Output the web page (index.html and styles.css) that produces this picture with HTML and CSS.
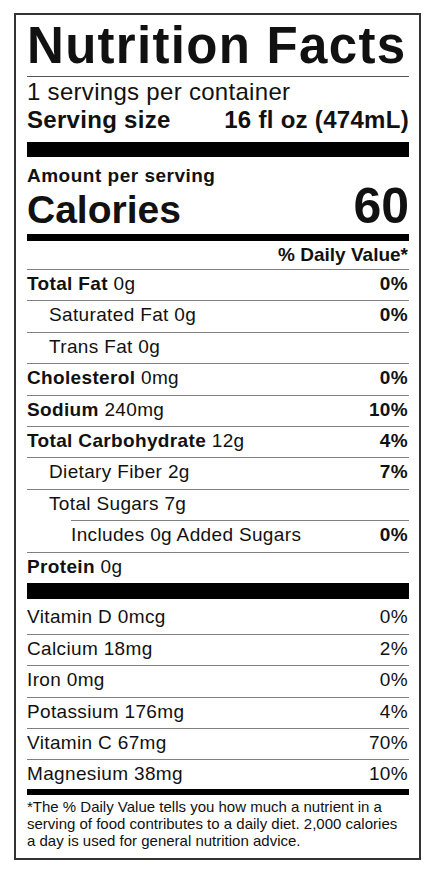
FILE: index.html
```html
<!DOCTYPE html>
<html lang="en">
<head>
    <meta charset="UTF-8">
    <meta name="viewport" content="width=device-width, initial-scale=1.0">
    <title>Nutrition Facts</title>
    <link rel="stylesheet" href="styles.css">
</head>
<body>

<div class="label">
    <!-- Header -->
    <h1 class="title">Nutrition Facts</h1>
    <p class="servings">1 servings per container</p>
    <div class="serving-size">
        <span>Serving size</span>
        <span>16 fl oz (474mL)</span>
    </div>
    <div class="bar bar-thick"></div>

    <!-- Calories -->
    <p class="amount">Amount per serving</p>
    <div class="calories">
        <span>Calories</span>
        <span class="cal-value">60</span>
    </div>
    <div class="bar bar-medium"></div>
    <div class="dv-head">% Daily Value*</div>

    <!-- Nutrients -->
    <div class="row"><span><b>Total Fat</b> 0g</span><b>0%</b></div>
    <div class="row indent"><span>Saturated Fat 0g</span><b>0%</b></div>
    <div class="row indent"><span>Trans Fat 0g</span></div>
    <div class="row"><span><b>Cholesterol</b> 0mg</span><b>0%</b></div>
    <div class="row"><span><b>Sodium</b> 240mg</span><b>10%</b></div>
    <div class="row"><span><b>Total Carbohydrate</b> 12g</span><b>4%</b></div>
    <div class="row indent"><span>Dietary Fiber 2g</span><b>7%</b></div>
    <div class="row indent"><span>Total Sugars 7g</span></div>
    <div class="row added"><span>Includes 0g Added Sugars</span><b>0%</b></div>
    <div class="row"><span><b>Protein</b> 0g</span></div>
    <div class="bar bar-thick bar-protein"></div>

    <!-- Vitamins and minerals -->
    <div class="vitamins">
        <div class="row"><span>Vitamin D 0mcg</span><span>0%</span></div>
        <div class="row"><span>Calcium 18mg</span><span>2%</span></div>
        <div class="row"><span>Iron 0mg</span><span>0%</span></div>
        <div class="row"><span>Potassium 176mg</span><span>4%</span></div>
        <div class="row"><span>Vitamin C 67mg</span><span>70%</span></div>
        <div class="row"><span>Magnesium 38mg</span><span>10%</span></div>
    </div>
    <div class="bar bar-foot"></div>

    <p class="footnote">*The % Daily Value tells you how much a nutrient in a serving of food contributes to a daily diet. 2,000 calories a day is used for general nutrition advice.</p>
</div>

</body>
</html>
```

FILE: styles.css
```css
body {
    font-family: "Liberation Sans", Arial, sans-serif;
    background-color: #fff;
    color: #111;
    margin: 0;
    padding: 13px 0 0 14px;
}
.label {
    width: 382px;
    border: 2px solid #333;
    padding: 0 10px 9px 11px;
}
.title {
    margin: 0;
    font-size: 51px;
    font-weight: bold;
    letter-spacing: 1.3px;
    line-height: 61px;
    border-bottom: 1px solid #555;
    white-space: nowrap;
}
.servings {
    margin: 0;
    font-size: 24px;
    letter-spacing: 0.3px;
    line-height: 29px;
}
.serving-size {
    display: flex;
    justify-content: space-between;
    font-size: 24px;
    font-weight: bold;
    letter-spacing: 0.3px;
    line-height: 28px;
}
.bar {
    background-color: #000;
}
.bar-thick {
    height: 15px;
    margin-top: 8px;
}
.amount {
    margin: 8px 0 0;
    font-size: 19px;
    font-weight: bold;
    letter-spacing: 0.5px;
    line-height: 22px;
}
.calories {
    display: flex;
    justify-content: space-between;
    align-items: baseline;
    height: 47px;
    line-height: 38px;
    font-weight: bold;
    font-size: 39px;
}
.cal-value {
    font-size: 50px;
}
.bar-medium {
    height: 7px;
}
.dv-head {
    text-align: right;
    font-size: 19px;
    font-weight: bold;
    line-height: 28px;
    padding-right: 1px;
}
.row {
    display: flex;
    justify-content: space-between;
    border-top: 1px solid #808080;
    font-size: 19px;
    letter-spacing: 0.35px;
    line-height: 28px;
    padding: 0 1px 2.4px 0;
}
.row.indent {
    padding-left: 22px;
}
.row.added {
    margin-left: 44px;
}
.bar-protein {
    height: 16px;
    margin-top: 0;
}
.vitamins .row:first-child {
    border-top: none;
    padding-top: 4px;
    padding-bottom: 3px;
}
.vitamins .row:last-child {
    padding-bottom: 1px;
}
.bar-foot {
    height: 6px;
}
.footnote {
    margin: 3px 0 0;
    font-size: 15px;
    line-height: 17px;
}
```
